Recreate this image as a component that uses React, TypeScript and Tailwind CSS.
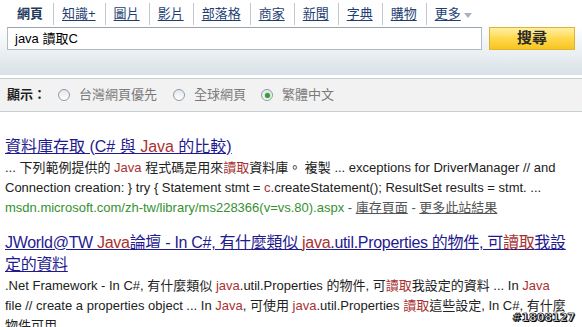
const tabs = ["知識+", "圖片", "影片", "部落格", "商家", "新聞", "字典", "購物"];

function Radio({ checked }: { checked?: boolean }) {
  return (
    <span className="relative inline-flex w-[12px] h-[12px] rounded-full border border-[#8d9aa6] bg-gradient-to-b from-[#e4e8ec] to-white items-center justify-center">
      {checked && <span className="w-[5px] h-[5px] rounded-full bg-[#3c9a3c] shadow-[0_0_2px_#5fc05f]" />}
    </span>
  );
}

const R = ({ children }: { children: React.ReactNode }) => <span className="text-[#a83232]">{children}</span>;

export default function App() {
  return (
    <div className="relative w-[582px] h-[327px] overflow-hidden bg-white font-['Liberation_Sans','Noto_Sans_CJK_TC',sans-serif] text-[13px] text-[#222]">
      <div className="h-[75px] bg-gradient-to-b from-white from-[35%] to-[#d9e2e8]">
        <div className="flex h-[25px] pt-[3px] pl-[17px] leading-[22px]">
          <span className="pr-[10px] font-bold text-[#22395c]">網頁</span>
          {tabs.map((t) => (
            <span key={t} className="border-l border-[#c4c8cc] pl-[8px] pr-[9px]">
              <a className="underline underline-offset-2 text-[#1f3f73]">{t}</a>
            </span>
          ))}
          <span className="border-l border-[#c4c8cc] pl-[8px] flex items-center">
            <a className="underline underline-offset-2 text-[#1f3f73]">更多</a>
            <svg width="8" height="5" viewBox="0 0 8 5" className="ml-[3px] mt-[2px]">
              <path d="M0 0 L8 0 L4 5 Z" fill="#a9b3bd" />
            </svg>
          </span>
        </div>
        <div className="flex mt-[2px] pl-[7px]">
          <div className="w-[475px] h-[23px] bg-white border border-[#b3bcc4] border-t-[#9aa4ad] pl-[7px] flex items-center text-[13px] text-black">
            java 讀取C
          </div>
          <button className="ml-[7px] w-[86px] h-[23px] border border-[#e0b23a] bg-gradient-to-b from-[#fff0a0] via-[#ffd84a] to-[#f6c51c] font-bold text-[15px] text-[#2a2a2a] flex items-center justify-center">
            搜尋
          </button>
        </div>
      </div>
      <div className="h-[3px] bg-white" />
      <div className="h-[34px] bg-[#f2f2f2] border-y border-[#c6cfd2] flex items-center pl-[7px] text-[13px]">
        <span className="font-bold text-[#1e1e1e] mr-[12px]">顯示：</span>
        <Radio />
        <span className="ml-[9px] mr-[16px] text-[#7a7a7a]">台灣網頁優先</span>
        <Radio />
        <span className="ml-[9px] mr-[15px] text-[#7a7a7a]">全球網頁</span>
        <Radio checked />
        <span className="ml-[9px] text-[#7a7a7a]">繁體中文</span>
      </div>

      <div className="pl-[5px] pt-[24px] whitespace-nowrap">
        <div>
          <div className="text-[16px] leading-[22px]">
            <a className="underline decoration-[#1f1a8f] text-[#1f1a8f]">
              資料庫存取 (C# 與 <R>Java</R> 的比較)
            </a>
          </div>
          <div className="leading-[20px]">
            ... 下列範例提供的 <R>Java</R> 程式碼是用來<R>讀取</R>資料庫。 複製 ... exceptions for DriverManager // and
            <br />
            Connection creation: {"}"} try {"{"} Statement stmt = <R>c</R>.createStatement(); ResultSet results = stmt. ...
            <br />
            <span className="text-[#35912f]">msdn.microsoft.com/zh-tw/library/ms228366(v=vs.80).aspx</span>
            <span className="text-[#555]"> - </span>
            <a className="underline text-[#555]">庫存頁面</a>
            <span className="text-[#555]"> - </span>
            <a className="underline text-[#555]">更多此站結果</a>
          </div>
        </div>

        <div className="mt-[14px]">
          <div className="text-[16px] leading-[22px] tracking-[-0.3px]">
            <a className="underline decoration-[#1f1a8f] text-[#1f1a8f]">
              JWorld@TW <R>Java</R>論壇 - In C#, 有什麼類似 <R>java</R>.util.Properties 的物件, 可<R>讀取</R>我設
              <br />
              定的資料
            </a>
          </div>
          <div className="leading-[20px]">
            .Net Framework - In C#, 有什麼類似 <R>java</R>.util.Properties 的物件, 可<R>讀取</R>我設定的資料 ... In <R>Java</R>
            <br />
            file // create a properties object ... In <R>Java</R>, 可使用 <R>java</R>.util.Properties <R>讀取</R>這些設定, In C#, 有什麼
            <br />
            物件可用
          </div>
        </div>
      </div>

      <div className="absolute right-[7px] bottom-[3px] font-['DejaVu_Sans',sans-serif] font-bold text-[11px] leading-[12px] text-white [-webkit-text-stroke:0.6px_#000] [text-shadow:0_0_1px_#000,1px_1px_0_#000]">
        #1808127
      </div>
    </div>
  );
}
